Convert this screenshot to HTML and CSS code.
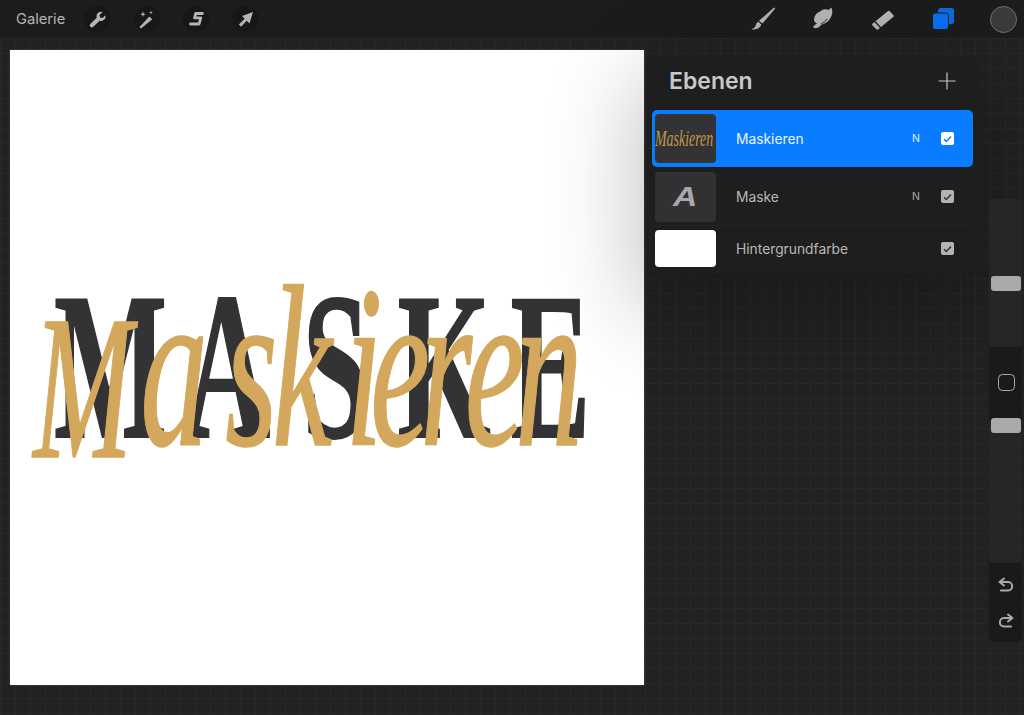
FILE: index.html
```html
<!DOCTYPE html>
<html lang="de">
<head>
<meta charset="utf-8">
<title>Ebenen</title>
<link rel="stylesheet" href="styles.css">
</head>
<body>
<div class="app">
  <header class="topbar">
    <div class="tools-left">
      <span class="gallery">Galerie</span>
      <span class="round"><svg width="26" height="26" viewBox="0 0 26 26"><path class="ico" d="M6.5 20.8c-1.100-.9-1-1.900-.2-2.700l6.400-6.300c-.6-2.300.1-4.300 1.800-5.300 1.300-.8 2.800-.8 3.900-.3l-2.900 2.700.5 2.500 2.500.6 2.800-2.800c.5 1.500.2 3.100-.9 4.300-1.200 1.300-3 1.700-4.800 1.200l-6.300 6.100c-.9.800-1.900.9-2.800 0z"/></svg></span>
      <span class="round"><svg width="26" height="26" viewBox="0 0 26 26"><path class="ico" d="M7 22.500 5.500 21l9.800-10.500 3 2.700z"/><path class="ico" d="M9 5.500l.7 2 2 .7-2 .7-.7 2-.7-2-2-.7 2-.7zM17 4.500l.5 1.500 1.500.5-1.500.5-.5 1.500-.5-1.500-1.500-.5 1.500-.5z"/></svg></span>
      <span class="round"><svg width="26" height="26" viewBox="0 0 26 26"><path class="ico-line" d="M19.500 7.500h-6.800l-1.200 4.300h6.300l-1.700 6.200H7.500"/></svg></span>
      <span class="round"><svg width="26" height="26" viewBox="0 0 26 26"><path class="ico" d="M20 6 16.500 17.500 13.800 14.800 8 20.700 5.800 18.500 11.700 12.700 9 10z"/></svg></span>
    </div>
    <div class="tools-right">
      <svg class="t-brush" width="28" height="26" viewBox="0 0 28 26"><path class="ico" d="M24 1.500 25.200 2.500 12.500 17.500 9 14.800z"/><path class="ico" d="M8.300 15.800 11.300 18.500c-.8 3.500-4.800 5.600-10 4.700 2.700-1 3.800-2 4.500-4 .4-1.500 1.200-2.900 2.500-3.400z"/></svg>
      <svg class="t-smudge" width="26" height="26" viewBox="0 0 26 26"><path class="ico" d="M4 13.500c.3-3.500 2-6 5-7.500 2-1 3-2.500 5-2.500 2-.7 3 .5 4.500.5l3-2.500.8 3.500c.2 3-1 6-2.800 8.500-2 2.800-5 4.500-8 5-1.500 2-4 3.800-6.500 3.800-1.500 0-1.900-1-1.500-2 .500-1 3-2.300 3.500-3.300-1.800 0-3.300-2-3-3.500z"/><path class="smudge-cut" d="M11 18c2-.8 4.500-2.500 6-5"/></svg>
      <svg class="t-eraser" width="26" height="26" viewBox="0 0 26 26"><path class="ico" d="M2.700 17.600 17.800 5.300c.8-.7 1.600-.6 2.200.1l3.300 3.500c.7.700.6 1.600-.1 2.200L8.300 23.300c-.8.600-1.600.5-2.200-.2L2.500 19.500c-.6-.6-.5-1.400.2-1.900z"/><path class="eraser-cut" d="M4.800 15.500 11 22"/></svg>
      <svg class="t-layers" width="24" height="24" viewBox="0 0 24 24"><rect class="lay-back" x="7" y="1" width="16" height="16" rx="2.500"/><rect class="lay-front" x="1.500" y="6" width="16" height="16.500" rx="2.500"/></svg>
      <span class="color-dot"></span>
    </div>
  </header>

  <main class="stage">
    <section class="canvas">
      <svg class="art" width="634" height="635" viewBox="0 0 634 635">
        <text class="masthead" transform="translate(0 387) scale(.57 1)" x="77 305 513 680 878">MASKE</text>
        <text class="script" transform="translate(0 395) scale(.58 1)"><tspan class="script-cap" x="40" dy="12">M</tspan><tspan x="225 371 452 578 621 707 784 871" dy="-12">askieren</tspan></text>
      </svg>
    </section>

    <aside class="layers">
      <div class="layers-head">
        <h2 class="layers-title">Ebenen</h2>
        <svg width="18" height="18" viewBox="0 0 18 18"><path class="plus" d="M9 .5v17M.5 9h17"/></svg>
      </div>
      <div class="layer layer-active">
        <span class="thumb thumb-script"><span class="thumb-word">Maskieren</span></span>
        <span class="layer-name">Maskieren</span>
        <span class="blend">N</span>
        <span class="check"><svg width="9" height="8" viewBox="0 0 9 8"><path class="tick" d="M1 4.200 3.300 6.500 8 1.500"/></svg></span>
      </div>
      <div class="layer layer-mid">
        <span class="thumb thumb-a"><span class="thumb-letter">A</span></span>
        <span class="layer-name">Maske</span>
        <span class="blend">N</span>
        <span class="check"><svg width="9" height="8" viewBox="0 0 9 8"><path class="tick" d="M1 4.200 3.300 6.500 8 1.500"/></svg></span>
      </div>
      <div class="layer layer-bg">
        <span class="thumb thumb-white"></span>
        <span class="layer-name">Hintergrundfarbe</span>
        <span class="check"><svg width="9" height="8" viewBox="0 0 9 8"><path class="tick" d="M1 4.200 3.300 6.500 8 1.500"/></svg></span>
      </div>
    </aside>

    <aside class="sidebar">
      <div class="track track-a"><span class="thumb-bar bar-a"></span></div>
      <div class="modify"><span class="square"></span></div>
      <div class="track track-b"><span class="thumb-bar bar-b"></span></div>
      <div class="history">
        <svg width="18" height="16" viewBox="0 0 18 16"><path class="hist" d="M7 1.500 2.500 5 7 8.500M3 5h8c5.500 0 5.500 8.500 0 8.500H4"/></svg>
        <svg width="18" height="16" viewBox="0 0 18 16"><path class="hist" d="M11 1.500 15.500 5 11 8.500M15 5H7c-5.500 0-5.500 8.500 0 8.500h7"/></svg>
      </div>
    </aside>
  </main>
</div>
</body>
</html>
```

FILE: styles.css
```css
* { box-sizing: border-box; }
html, body { margin: 0; padding: 0; }
body { background: #222; font-family: Inter, "Liberation Sans", sans-serif; }
.app { width: 1024px; height: 715px; overflow: hidden; display: flex; flex-direction: column; }

.topbar { height: 38px; flex: none; background: #1c1c1c; display: flex; justify-content: space-between; align-items: center; padding: 0 7px 0 16px; }
.tools-left { display: flex; align-items: center; gap: 23.500px; }
.gallery { font-size: 14.700px; color: #b4b4b4; margin-right: -4.500px; }
.round { width: 26px; height: 26px; border-radius: 50%; background: #171717; display: block; }
.round svg { display: block; }
.ico { fill: #b4b4b4; }
.ico-line { fill: none; stroke: #b4b4b4; stroke-width: 2.800; stroke-linejoin: round; stroke-linecap: round; }
.tools-right { display: flex; align-items: center; }
.tools-right svg { display: block; }
.t-brush { margin-left: -2px; margin-right: 32px; }
.t-smudge { margin-right: 34px; }
.t-eraser { margin-right: 35px; }
.t-layers { margin-right: 35px; }
.eraser-cut { stroke: #1c1c1c; stroke-width: 1.300; }
.smudge-cut { fill: none; stroke: #1c1c1c; stroke-width: 1; }
.lay-back { fill: #0a6be0; }
.lay-front { fill: #0a6ff0; stroke: #1c1c1c; stroke-width: 1; }
.color-dot { width: 27px; height: 27px; border-radius: 50%; background: #3b3b3b; border: 1.500px solid #707070; display: block; }

.stage {
  flex: 1;
  position: relative;
  padding: 12px 0 0 10px;
  background-color: #222;
  background-image: linear-gradient(#282828 1px, transparent 1px), linear-gradient(90deg, #282828 1px, transparent 1px);
  background-size: 15px 15px;
}
.canvas { width: 634px; height: 635px; background: #fff; box-shadow: 0 0 2px rgba(255,255,255,.2); }
.art { display: block; }
.masthead { font-family: "Liberation Serif", serif; font-weight: 700; font-size: 210px; fill: #333336; stroke: #333336; stroke-width: 2; }
.script { font-family: "Liberation Serif", serif; font-style: italic; font-weight: 400; font-size: 232px; fill: #d4a85c; stroke: #d4a85c; stroke-width: 1.500; stroke-linejoin: round; }
.script-cap { font-size: 205px; }

.layers {
  position: absolute; left: 646px; top: 18px; width: 333px; height: 217px;
  background: #1e1e1e; border-radius: 8px; padding: 0 6px;
  box-shadow: 0 30px 90px 10px rgba(0,0,0,.24);
}
.layers-head { height: 54px; display: flex; justify-content: space-between; align-items: center; padding: 0 17px 4px 17px; }
.layers-title { margin: 0; font-size: 23px; font-weight: 600; color: #c8c8c8; }
.plus { stroke: #c4c4c4; stroke-width: 1.200; fill: none; }
.layer { display: flex; align-items: center; padding: 0 19px 0 3px; width: 321px; border-bottom: 1px solid #242424; }
.layer-active { height: 57px; background: #0a7cff; border-radius: 5px; border-bottom: 0; }
.layer-mid { height: 58px; margin-top: 1px; }
.layer-bg { height: 44px; border-bottom: 0; }
.layer-bg .layer-name, .layer-bg .check { margin-top: 1px; }
.thumb { width: 61px; flex: none; display: block; border-radius: 4px; margin-right: 20px; overflow: hidden; }
.thumb-script { height: 49px; background: #333336; display: flex; align-items: center; }
.thumb-word { font-family: "Liberation Serif", serif; font-style: italic; font-size: 24px; color: #c0984c; transform: scaleX(.58); transform-origin: left center; white-space: nowrap; }
.thumb-a { height: 50px; background: #313133; display: flex; align-items: center; justify-content: center; }
.thumb-letter { color: #a8a8a8; font: italic 700 28px/1 "Liberation Sans", sans-serif; transform: scaleX(1.200); display: block; }
.thumb-white { height: 37px; background: #fff; }
.layer-name { flex: 1; font-size: 13.800px; color: #b8b8b8; }
.layer-active .layer-name { color: #eaf3ff; }
.blend { font-size: 10.500px; color: #aaa; margin-right: 21px; }
.layer-active .blend { color: #dfeeff; }
.check { width: 13px; height: 13px; border-radius: 2px; background: #b4b4b4; display: flex; align-items: center; justify-content: center; }
.layer-active .check { background: #fff; }
.tick { fill: none; stroke: #333; stroke-width: 1.500; }
.layer-active .tick { stroke: #0a7cff; }

.sidebar {
  position: absolute; left: 989px; top: 161px; width: 33px; height: 443px;
  background: #1a1a1a; border-radius: 5px; display: flex; flex-direction: column;
}
.track { background: #262626; border-radius: 3px; position: relative; flex: none; }
.track-a { height: 148px; }
.track-b { height: 143px; }
.thumb-bar { position: absolute; left: 2px; width: 30px; height: 15px; background: #a9a9a9; border-radius: 3px; }
.bar-a { top: 77px; }
.bar-b { top: -2px; }
.modify { height: 73px; padding-bottom: 3px; display: flex; align-items: center; justify-content: center; }
.square { width: 17px; height: 17px; border: 1.700px solid #aaa; border-radius: 4.500px; display: block; margin-right: -1px; }
.history { flex: 1; display: flex; flex-direction: column; align-items: center; gap: 20px; padding-top: 14px; }
.history svg { display: block; }
.hist { fill: none; stroke: #aaa; stroke-width: 2; stroke-linecap: round; stroke-linejoin: round; }
```
